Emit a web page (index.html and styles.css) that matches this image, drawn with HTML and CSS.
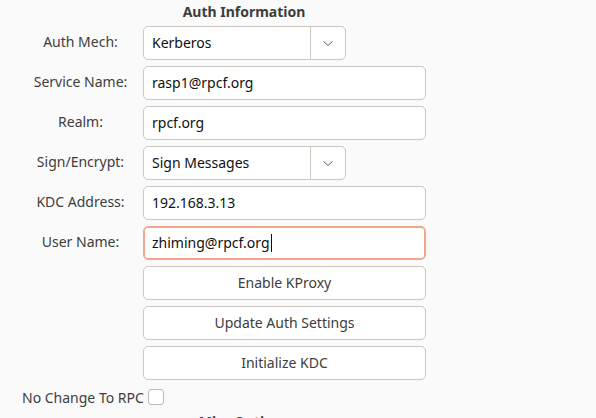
FILE: index.html
```html
<!DOCTYPE html>
<html>
<head>
<meta charset="utf-8">
<link rel="stylesheet" href="styles.css">
</head>
<body>
<div class="panel">
  <div class="title">Auth Information</div>
  <div class="form">
    <div class="label">Auth Mech:</div>
    <div class="combo">
      <div class="combo-text">Kerberos</div>
      <div class="combo-btn">
        <svg width="16" height="16" viewBox="0 0 16 16"><path d="M3.5 6.5 L8 10.5 L12.5 6.5" fill="none" stroke="#5e5c5a" stroke-width="1"/></svg>
      </div>
    </div>

    <div class="label">Service Name:</div>
    <div class="entry">rasp1@rpcf.org</div>

    <div class="label">Realm:</div>
    <div class="entry">rpcf.org</div>

    <div class="label">Sign/Encrypt:</div>
    <div class="combo">
      <div class="combo-text">Sign Messages</div>
      <div class="combo-btn">
        <svg width="16" height="16" viewBox="0 0 16 16"><path d="M3.5 6.5 L8 10.5 L12.5 6.5" fill="none" stroke="#5e5c5a" stroke-width="1"/></svg>
      </div>
    </div>

    <div class="label">KDC Address:</div>
    <div class="entry">192.168.3.13</div>

    <div class="label">User Name:</div>
    <div class="entry focused">zhiming@rpcf.org<span class="caret"></span></div>

    <div class="spacer"></div>
    <div class="button">Enable KProxy</div>

    <div class="spacer"></div>
    <div class="button">Update Auth Settings</div>

    <div class="spacer"></div>
    <div class="button">Initialize KDC</div>
  </div>
  <div class="check-row">
    <span class="check-label">No Change To RPC</span>
    <span class="checkbox"></span>
  </div>
  <div class="subtitle">Misc Options</div>
</div>
</body>
</html>
```

FILE: styles.css
```css
html, body {
  margin: 0;
  padding: 0;
}
body {
  background: #fafafa;
  font-family: "Noto Sans", "DejaVu Sans", sans-serif;
  font-size: 14px;
  color: #3d3d3d;
  width: 596px;
  height: 418px;
  overflow: hidden;
}
.panel {
  display: flex;
  flex-direction: column;
}
.title, .subtitle {
  width: 488px;
  height: 26px;
  line-height: 23px;
  text-align: center;
  font-weight: bold;
  color: #3d3d3d;
}
.form {
  display: grid;
  grid-template-columns: 117px 283px;
  column-gap: 4px;
  row-gap: 6px;
  margin-left: 22px;
}
.label {
  height: 34px;
  line-height: 32px;
  text-align: center;
  color: #3d3d3d;
}
.entry, .combo, .button {
  box-sizing: border-box;
  height: 34px;
  border: 1px solid #cdc7c2;
  border-radius: 5px;
  background: #ffffff;
  line-height: 32px;
}
.entry {
  padding-left: 8px;
  color: #101010;
  white-space: nowrap;
}
.entry.focused {
  border-color: #f2a58b;
  box-shadow: inset 0 0 0 1px #f2a58b;
}
.caret {
  display: inline-block;
  width: 1px;
  height: 18px;
  background: #101010;
  vertical-align: -4px;
  margin-left: 1px;
}
.combo {
  width: 203px;
  display: flex;
}
.combo-text {
  width: 167px;
  padding-left: 8px;
  box-sizing: border-box;
  color: #101010;
  border-right: 1px solid #cdc7c2;
}
.combo-btn {
  flex: 1;
  display: flex;
  align-items: center;
  justify-content: center;
}
.combo-btn svg {
  display: block;
}
.button {
  text-align: center;
  color: #3d3d3d;
}
.check-row {
  display: flex;
  align-items: center;
  gap: 4px;
  margin-left: 22px;
  margin-top: 7px;
  height: 20px;
}
.checkbox {
  box-sizing: border-box;
  width: 16px;
  height: 16px;
  border: 1px solid #bfb8b1;
  border-radius: 3px;
  background: #ffffff;
}
.subtitle {
  margin-top: 3px;
}
```
